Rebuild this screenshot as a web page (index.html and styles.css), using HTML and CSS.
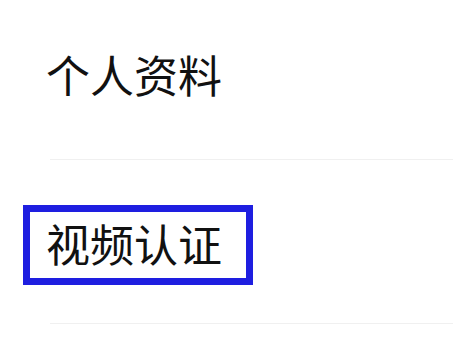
FILE: index.html
```html
<!DOCTYPE html>
<html lang="zh-CN">
<head>
<meta charset="utf-8">
<title>个人资料</title>
<link rel="stylesheet" href="styles.css">
</head>
<body>
<div class="list">
  <div class="item item-first">
    <span class="label">个人资料</span>
  </div>
  <div class="divider"></div>
  <div class="item item-second">
    <span class="label boxed">视频认证</span>
  </div>
  <div class="divider divider-second"></div>
</div>
</body>
</html>
```

FILE: styles.css
```css
html, body {
  margin: 0;
  padding: 0;
  background: #ffffff;
}

body {
  width: 453px;
  height: 363px;
  overflow: hidden;
  font-family: "Noto Sans CJK SC", "Noto Sans", sans-serif;
  color: #111111;
}

.list {
  display: flex;
  flex-direction: column;
}

.item {
  display: flex;
  align-items: center;
}

.label {
  font-size: 44px;
  line-height: 44px;
  font-weight: 400;
  letter-spacing: 0;
}

.item-first {
  padding-top: 52px;
  padding-left: 46px;
  height: 44px;
}

.divider {
  margin-left: 50px;
  height: 1px;
  background: #f0f0f0;
}

.item-first + .divider {
  margin-top: 63px;
}

.item-second {
  margin-top: 45px;
  padding-left: 23px;
}

.boxed {
  display: block;
  width: 176px;
  padding: 9px 24px 13px 16px;
  border: 7px solid #1e1ee0;
}

.divider-second {
  margin-top: 38px;
}
```
